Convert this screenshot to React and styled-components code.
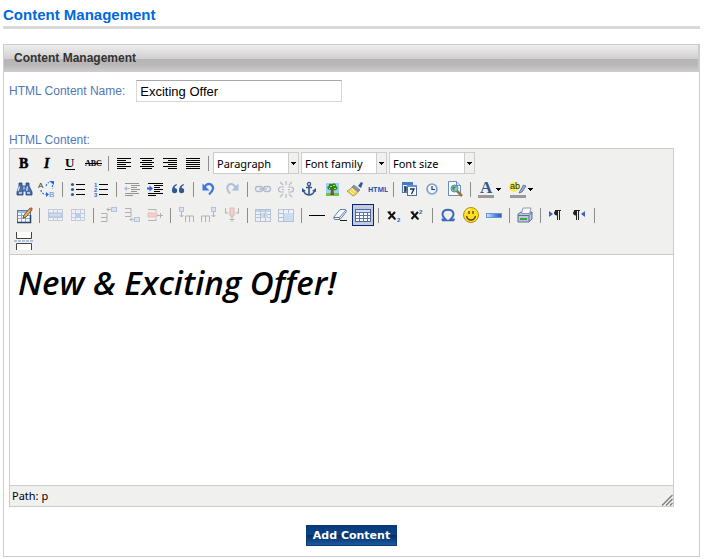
import React from "react";
import styled, { createGlobalStyle, css } from "styled-components";

const UI_FONT = `"Liberation Sans", Arial, sans-serif`;
const SMALL_FONT = `"Noto Sans", Tahoma, sans-serif`;
const SERIF = `"Liberation Serif", serif`;

const GlobalStyle = createGlobalStyle`
  *, *::before, *::after { box-sizing: border-box; }
  body { margin: 0; background: #fff; font-family: ${UI_FONT}; color: #000; }
  button, input, select { margin: 0; font: inherit; }
`;

const Page = styled.main`
  padding: 6px 4px 2px 3px;
`;

const PageTitle = styled.h1`
  margin: 0 0 15px;
  padding-bottom: 2px;
  border-bottom: 3px solid #d9d9d9;
  color: #0068e0;
  font-size: 15px;
  line-height: 18px;
`;

const Panel = styled.section`
  border: 1px solid #ccc;
`;

const PanelTitle = styled.h2`
  margin: 0;
  padding: 0 10px;
  border-right: 1px solid #ccc;
  background: linear-gradient(#efeeee, #d0cecf 52%, #b7b4b5 53%, #bab8b8 75%, #cfcece);
  color: #333;
  font-size: 12px;
  line-height: 27px;
`;

const Form = styled.form`
  padding: 8px 25px 10px 5px;
`;

const NameRow = styled.div`
  display: flex;
  align-items: center;
  gap: 11px;
  margin-bottom: 30px;
`;

const Label = styled.label`
  display: block;
  color: #5078b8;
  font-size: 12px;
  line-height: 16px;
`;

const NameInput = styled.input`
  width: 206px;
  height: 22px;
  padding: 0 3px;
  border: 1px solid #d4d6da;
  border-top-color: #a5a8b0;
  background: #fff;
  font-size: 13px;
`;

const Editor = styled.div`
  border: 1px solid #ccc;
`;

const Toolbar = styled.div`
  padding: 1px 0 0 3px;
  border-bottom: 1px solid #ccc;
  background: #f0f0ee;
`;

const ToolRow = styled.div`
  display: flex;
  align-items: center;
  gap: 1px;
  height: 26px;
`;

const ToolButton = styled.button`
  display: flex;
  flex: none;
  align-items: center;
  width: ${(p) => (p.$split ? 31 : 22)}px;
  height: 22px;
  padding: 0;
  border: 1px solid transparent;
  background: transparent;
  ${(p) => p.$active && css`
    border-color: #0a246a;
    background: #c2cbe0;
  `}
  svg { flex: none; }
`;

const Separator = styled.span`
  flex: none;
  width: 1px;
  height: 15px;
  margin: 0 3px;
  background: #8c8c8c;
`;

const Picker = styled.span`
  position: relative;
  flex: none;
  width: 86px;
  height: 22px;
  & + & { margin-left: 1px; }
`;

const PickerSelect = styled.select`
  width: 100%;
  height: 100%;
  padding: 0 12px 0 3px;
  border: 1px solid #ccc;
  border-radius: 0;
  background: #fff;
  color: #000;
  appearance: none;
  font-family: ${SMALL_FONT};
  font-size: 11px;
`;

const PickerArrow = styled.span`
  position: absolute;
  top: 1px;
  right: 1px;
  bottom: 1px;
  display: flex;
  align-items: center;
  justify-content: center;
  width: 10px;
  border-left: 1px solid #ccc;
  background: #f0f0ee;
  pointer-events: none;
`;

const Content = styled.div`
  min-height: 230px;
  padding: 8px;
  background: #fff;
  font-family: "Open Sans", "Trebuchet MS", sans-serif;
  font-size: 33px;
  font-style: italic;
  font-weight: 600;
  font-variant-ligatures: none;
  line-height: 40px;
  p { margin: 0; }
`;

const StatusBar = styled.div`
  display: flex;
  align-items: flex-end;
  justify-content: space-between;
  border-top: 1px solid #ccc;
  padding-left: 2px;
  background: #f0f0ee;
  font-family: ${SMALL_FONT};
  font-size: 11px;
  line-height: 20px;
`;

const Actions = styled.div`
  display: flex;
  justify-content: center;
  margin: 18px 0 0 20px;
`;

const SubmitButton = styled.button`
  height: 21px;
  padding: 0 6px;
  border: 1px solid #0b3a70;
  background: linear-gradient(#063a7b, #0a4588 45%, #003067 50%, #1d5ba0);
  color: #fff;
  font-family: "DejaVu Sans", Verdana, sans-serif;
  font-size: 11px;
  font-weight: 700;
  white-space: nowrap;
`;

const lines = (rows, color = "#000") =>
  rows.map(([x, y, w]) => <rect key={`${x}-${y}`} x={x} y={y} width={w} height="1" fill={color} />);

const Arrow = () => (
  <svg width="5" height="3" viewBox="0 0 5 3" shapeRendering="crispEdges" aria-hidden="true">
    <path d="M0 0H5V1H4V2H3V3H2V2H1V1H0Z" />
  </svg>
);

const align = (xs) => lines(xs.map(([x, w], i) => [x, 5 + i * 2, w]));
const L = 14;
const S = 9;

const icons = {
  bold: <text x="5" y="15" fontFamily={SERIF} fontSize="14" fontWeight="700" stroke="#000" strokeWidth=".5">B</text>,
  italic: <text x="7" y="15" fontFamily={SERIF} fontSize="14" fontWeight="700" fontStyle="italic" stroke="#000" strokeWidth=".4">I</text>,
  underline: (
    <>
      <text x="5" y="14" fontFamily={SERIF} fontSize="13" fontWeight="700">U</text>
      <rect x="5" y="16" width="10" height="1" />
    </>
  ),
  strike: (
    <>
      <text x="2" y="13" fontFamily={SERIF} fontSize="8" fontWeight="700">ABC</text>
      <rect x="2" y="10" width="17" height="1" />
    </>
  ),
  left: align([[3, L], [3, S], [3, L], [3, S], [3, L], [3, S]]),
  center: align([[3, L], [5, S + 1], [3, L], [5, S + 1], [3, L], [5, S + 1]]),
  right: align([[3, L], [8, S], [3, L], [8, S], [3, L], [8, S]]),
  justify: align([[3, L], [3, L], [3, L], [3, L], [3, L], [3, L]]),
  find: (
    <>
      <path d="M5 4h3v3h4V4h3v3l3 6v3h-6v-4H9v4H3v-3l2-6z" fill="#4c70ad" stroke="#233f75" strokeWidth=".8" />
      <path d="M5.5 7.5 4 12M13.5 7.5 12.7 12M5 14h3M13 14h3" stroke="#d2e1fa" strokeWidth="1.3" />
      <path d="M9.5 7.5v3h1v-3z" fill="#dbe5f5" />
    </>
  ),
  replace: (
    <>
      <text x="1" y="9" fontFamily={UI_FONT} fontSize="8" fill="#333">A</text>
      <text x="12" y="18" fontFamily={UI_FONT} fontSize="8" fill="#5686e5">B</text>
      <path d="M9 7Q10 4 12 3.5M15.5 6v4M4 11Q4 15 10 15.5" fill="none" stroke="#3a70e3" strokeWidth="1.2" strokeDasharray="2 1.4" />
      <path d="M12 2h5v4zM9 13l3 2.5L9 18z" fill="#2f67df" />
    </>
  ),
  bullets: (
    <>
      {[5, 10, 15].map((y) => (
        <g key={y}>
          <circle cx="4.5" cy={y + 0.5} r="1.6" fill="#385a98" />
          <rect x="8" y={y} width="9" height="1" />
        </g>
      ))}
    </>
  ),
  numbers: (
    <>
      {[5, 10, 15].map((y, i) => (
        <g key={y}>
          <text x="3" y={y + 3} fontFamily={UI_FONT} fontSize="6" fontWeight="700" fill="#3868c8">{i + 1}</text>
          <rect x="8" y={y} width="9" height="1" />
        </g>
      ))}
    </>
  ),
  outdent: (
    <g opacity=".38">
      {lines([[3, 4, 14], [9, 6, 9], [9, 8, 6], [9, 10, 9], [9, 12, 6], [3, 14, 14], [3, 16, 8]])}
      <path d="M2 9.5 5 7v2h3v1H5v2z" fill="#3463c5" />
    </g>
  ),
  indent: (
    <>
      {lines([[3, 4, 15], [9, 6, 9], [9, 8, 6], [9, 10, 9], [9, 12, 6], [3, 14, 15], [3, 16, 8]])}
      <path d="M8 9.5 4.5 6.5v2H2v2h2.5v2z" fill="#2867dd" />
    </>
  ),
  quote: (
    <g fill="#315892">
      <path d="M8.5 5Q4 6.5 4 11.5A2.6 2.6 0 1 0 6.5 9Q6.6 7 9 6z" />
      <path d="M15.5 5Q11 6.5 11 11.5A2.6 2.6 0 1 0 13.5 9Q13.6 7 16 6z" />
    </g>
  ),
  undo: (
    <>
      <path d="M5 9Q8 3.5 12 5.5Q17 9 10 15.5" fill="none" stroke="#3f78da" strokeWidth="2.2" />
      <path d="M3.5 4.5v7h7z" fill="#3f78da" />
    </>
  ),
  redo: (
    <g opacity=".4">
      <path d="M14 9Q11 3.5 7 5.5Q3 9 8 14.5" fill="none" stroke="#4277bd" strokeWidth="2" />
      <path d="M16.5 4.5v7h-7z" fill="#4277bd" />
    </g>
  ),
  link: (
    <g fill="none" stroke="#7e8fac" opacity=".55" strokeWidth="1.3">
      <rect x="2.5" y="7.5" width="7" height="5" rx="2.5" />
      <rect x="10.5" y="7.5" width="7" height="5" rx="2.5" />
      <path d="M6 10h8" />
    </g>
  ),
  unlink: (
    <g fill="none" stroke="#7e8fac" opacity=".55" strokeWidth="1.2">
      <path d="M8 8H5a2 2 0 0 0 0 5h3M12 8h3a2 2 0 0 1 0 5h-3M6 10.5h2M12 10.5h2" />
      <path d="m4 3 3 3M10 2v4M16 3l-3 3M4 18l3-3M10 19v-4M16 18l-3-3" />
    </g>
  ),
  anchor: (
    <>
      <circle cx="10" cy="5" r="1.6" fill="none" stroke="#34568e" strokeWidth="1.3" />
      <path d="M10 6.5V16M7 8.5h6M4.5 11q.5 4.5 5.5 5 5-.5 5.5-5" fill="none" stroke="#34568e" strokeWidth="1.6" />
      <path d="M3 13V9l4 3zM17 13V9l-4 3z" fill="#34568e" />
    </>
  ),
  image: (
    <>
      <rect x="4" y="4" width="13" height="13" fill="#9ad0fb" />
      <rect x="4" y="14" width="13" height="3" fill="#6fc04f" />
      <path d="M9 10h2.5l.5 6H8.5z" fill="#81531d" />
      <path d="M6 10Q4 8 7 7q-1-3 3-2 4-2 4 2 3 2 0 4-3 1-4-1-2 2-4 0z" fill="#268616" />
      <path d="M8 7.5h2M11 6.5h2M12 9.5h2M7 9.5h1" stroke="#c6e03d" />
    </>
  ),
  cleanup: (
    <>
      <path d="m13 7 3-4 2 1-2 5z" fill="#315797" />
      <path d="m9 6 6 5-2 2-6-5z" fill="#8797ba" stroke="#54648a" strokeWidth=".6" />
      <path d="M7 8Q5 11 2 12l6 5q3-1 5-4z" fill="#f3d65f" stroke="#987d31" strokeWidth=".7" />
      <path d="M5 12l3 3M7 10l3 3" stroke="#fff3a8" />
    </>
  ),
  html: <text x="0" y="13" fontFamily={SMALL_FONT} fontSize="7" fontWeight="700" fill="#2755ad">HTML</text>,
  date: (
    <>
      <rect x="3.5" y="3.5" width="10" height="10" fill="#e6effd" stroke="#4979c2" />
      <rect x="3" y="3" width="11" height="3" fill="#4979c2" />
      <rect x="8.5" y="6.5" width="9" height="10" fill="#f7faff" stroke="#526c9a" />
      <rect x="8" y="6" width="10" height="2" fill="#6691d5" />
      <path d="M5 8h2v4H5M5 10h2M11 10h4l-2.5 5" fill="none" stroke="#142c57" strokeWidth="1.3" />
    </>
  ),
  time: (
    <>
      <circle cx="10" cy="10" r="5" fill="#edf4fd" stroke="#7c9bcd" strokeWidth="1.6" />
      <path d="M10 7v3.5h3" fill="none" stroke="#233c74" strokeWidth="1.2" />
    </>
  ),
  preview: (
    <>
      <path d="M3.5 2.5h8l4 4v10h-12z" fill="#fafcff" stroke="#6c8cc0" />
      <path d="M11.5 2.5v4h4" fill="#cfe0f7" stroke="#6c8cc0" />
      <path d="m12 12 5 5" stroke="#9b7334" strokeWidth="2.5" />
      <circle cx="9.5" cy="9.5" r="3.5" fill="#89c8b1" stroke="#5784bd" />
      <path d="M7 9q2-3 4-1l-2 2 1 2q-2 0-3-3z" fill="#47924b" />
    </>
  ),
  color: (
    <>
      <text x="4" y="14" fontFamily={SERIF} fontSize="17" fontWeight="700" fill="#34568e">A</text>
      <rect x="2" y="16" width="16" height="3" fill="#999" />
    </>
  ),
  highlight: (
    <>
      <circle cx="6" cy="8" r="5" fill="#f7ec54" />
      <text x="2" y="10" fontFamily={UI_FONT} fontSize="9" fill="#222">ab</text>
      <path d="m12 12 3.5-6 2.5 1-4 6-3 1z" fill="#8fb0dd" stroke="#4c6690" strokeWidth=".8" />
      <rect x="2" y="16" width="16" height="3" fill="#999" />
    </>
  ),
  table: (
    <>
      <rect x="3.5" y="5.5" width="13" height="12" fill="#f5f9ff" stroke="#577bb4" />
      <rect x="4" y="6" width="12" height="2" fill="#9bb9e7" />
      <path d="M4 10.5h12M4 13.5h12M7.5 8v9M11.5 8v9" stroke="#8aa6d2" />
      <path d="M16.5 10v7.5H3" fill="none" stroke="#293f65" strokeWidth="1.5" />
      <path d="m10 10 6-7 2 2-6 7-3 1z" fill="#efb252" stroke="#5c3b17" strokeWidth=".8" />
      <path d="m15 4 2-2 2 2-2 2z" fill="#b66945" />
    </>
  ),
  rowProps: (
    <g opacity=".4">
      <rect x="3.5" y="4.5" width="14" height="11" fill="#e9f1ff" stroke="#8098c1" />
      <path d="M3 12.5h14M8.5 5v3M12.5 5v3M8.5 12v3M12.5 12v3" stroke="#8098c1" />
      <rect x="4" y="8" width="13" height="4" fill="#9cbbf0" stroke="#5e79b0" />
    </g>
  ),
  cellProps: (
    <g opacity=".4">
      <rect x="3.5" y="4.5" width="13" height="11" fill="#e9f1ff" stroke="#8098c1" />
      <path d="M3 8.5h14M3 12.5h14M7.5 5v10M12.5 5v10" stroke="#8098c1" />
      <rect x="7" y="8" width="6" height="4" fill="#6f9dec" />
    </g>
  ),
  rowBefore: (
    <g opacity=".4" fill="none" stroke="#555">
      <path d="M2 8.5h6v8H2M2 12.5h6M8 4.5h5M10 2.5l-2 2 2 2" />
      <rect x="12.5" y="2.5" width="5" height="4" fill="#bcd2fb" stroke="#587ec5" />
    </g>
  ),
  rowAfter: (
    <g opacity=".4" fill="none" stroke="#555">
      <path d="M3 3.5h6v8H3M3 7.5h6M8 14.5h5M10 12.5l-2 2 2 2" />
      <rect x="12.5" y="12.5" width="5" height="4" fill="#bcd2fb" stroke="#587ec5" />
    </g>
  ),
  rowDelete: (
    <g opacity=".4" fill="none" stroke="#555">
      <path d="M3 4.5h8v2M3 15.5h8v-2" />
      <path d="M3 8h9v4H3z" fill="#f4a1a1" stroke="#d77" />
      <path d="M12 10.5h6M15.5 8v5" />
    </g>
  ),
  colBefore: (
    <g opacity=".4" fill="none" stroke="#555">
      <rect x="3.5" y="2.5" width="4" height="4" fill="#bcd2fb" stroke="#587ec5" />
      <path d="M5.5 7v5M3.5 10l2 2 2-2M9.5 17v-6h8v6M13.5 11v6" />
    </g>
  ),
  colAfter: (
    <g opacity=".4" fill="none" stroke="#555">
      <rect x="12.5" y="2.5" width="4" height="4" fill="#bcd2fb" stroke="#587ec5" />
      <path d="M14.5 7v5M12.5 10l2 2 2-2M2.5 17v-6h8v6M6.5 11v6" />
    </g>
  ),
  colDelete: (
    <g opacity=".4" fill="none" stroke="#555">
      <path d="M3.5 3v5h3M16.5 3v5h-3" />
      <path d="M8 3h4v8H8z" fill="#f4a1a1" stroke="#c66" />
      <path d="M10 11v6M7.5 14.5h5" />
    </g>
  ),
  split: (
    <g opacity=".45">
      <rect x="2.5" y="4.5" width="15" height="12" fill="#edf3ff" stroke="#6d8bbd" />
      <rect x="3" y="5" width="14" height="2" fill="#8eaee4" />
      <path d="M3 9.5h14M3 12.5h14M7.5 5v11M12.5 5v11" stroke="#6d8bbd" />
      <rect x="8" y="8" width="7" height="5" fill="#9dbdf4" />
      <path d="M11.5 8v5" stroke="#6d8bbd" />
    </g>
  ),
  merge: (
    <g opacity=".45">
      <rect x="2.5" y="4.5" width="15" height="12" fill="#edf3ff" stroke="#6d8bbd" />
      <path d="M3 8.5h14M3 12.5h14M7.5 5v11M12.5 5v11" stroke="#6d8bbd" />
      <rect x="8" y="8" width="9" height="8" fill="#a6c4f8" />
    </g>
  ),
  rule: <rect x="2" y="10" width="16" height="1" />,
  eraser: (
    <>
      <path d="M3.5 12.5 10 4.5h5.5l1 2-6.5 8H4.5z" fill="#f5f8fe" stroke="#667da8" />
      <path d="M4 12.5h5.5l6.5-7.5M9.5 12.5v2" fill="none" stroke="#667da8" />
      <path d="M10 15.5h7" stroke="#222" />
    </>
  ),
  grid: (
    <>
      <rect x="2.5" y="4.5" width="15" height="12" fill="#fff" stroke="#4e6a99" />
      <rect x="3" y="5" width="14" height="2" fill="#d3e3fc" />
      <path d="M3 7.5h14M3 10.5h14M3 13.5h14M6.5 7v9M10.5 7v9M14.5 7v9" stroke="#5c76a4" />
    </>
  ),
  sub: (
    <>
      <path d="M4.5 7 11 14M11 7l-6.5 7" stroke="#111" strokeWidth="2" />
      <path d="M3.5 7H7M10 14h2" stroke="#111" />
      <text x="13" y="17" fontFamily={UI_FONT} fontSize="6" fontWeight="700" fill="#2864d5">2</text>
    </>
  ),
  sup: (
    <>
      <path d="M4.5 7 11 14M11 7l-6.5 7" stroke="#111" strokeWidth="2" />
      <path d="M3.5 7H7M10 14h2" stroke="#111" />
      <text x="12" y="9" fontFamily={UI_FONT} fontSize="6" fontWeight="700" fill="#2864d5">2</text>
    </>
  ),
  omega: <path d="M4 15.2h4.5Q4.5 12 4.5 9 5 4.8 10 4.8T15.5 9q0 3-4 6.2H16M4.5 15.5v-2M15.8 15.5v-2" fill="none" stroke="#3c69bf" strokeWidth="2" />,
  smiley: (
    <>
      <circle cx="10" cy="10" r="7.5" fill="#ffdf22" stroke="#b88c13" />
      <path d="M8 6v3M12 6v3M5.5 11q1 4 4.5 4t4.5-4" fill="none" stroke="#573f08" strokeWidth="1.3" />
      <path d="M5 7q1-3 4-3" fill="none" stroke="#fff9a8" />
    </>
  ),
  advRule: (
    <>
      <defs>
        <linearGradient id="rule-fade">
          <stop stopColor="#d5e5ff" />
          <stop offset=".6" stopColor="#4e86df" />
          <stop offset="1" stopColor="#275cb5" />
        </linearGradient>
      </defs>
      <rect x="2.5" y="8.5" width="15" height="4" fill="url(#rule-fade)" stroke="#6b94d3" />
    </>
  ),
  print: (
    <>
      <path d="m3 9 3-2h11v7l-3 3H3z" fill="#bcc8dc" stroke="#5e7191" />
      <path d="M3 10.5h11l3-3M14 10.5V17" fill="none" stroke="#5e7191" />
      <path d="M8 3h8l-1.5 5.5H6.5z" fill="#f8faff" stroke="#7189b1" strokeWidth=".8" />
      <rect x="5" y="13" width="7" height="2" fill="#39aa35" />
    </>
  ),
  ltr: (
    <>
      <path d="M3 6v6l4-3z" fill="#3564c5" />
      <path d="M11.5 6v4h-1a2 2 0 0 1 0-4zM9 5.5h6M11.5 6v9M13.5 6v9" stroke="#222" fill="#222" />
    </>
  ),
  rtl: (
    <>
      <path d="M16 6v6l-4-3z" fill="#3564c5" />
      <path d="M7.5 6v4h-1a2 2 0 0 1 0-4zM5 5.5h6M7.5 6v9M9.5 6v9" stroke="#222" fill="#222" />
    </>
  ),
  pageBreak: (
    <>
      <path d="M2.5 1v6.5h15V1M2.5 19v-6.5h15V19" fill="#fff" stroke="#444" />
      <path d="M0 10h19" stroke="#6a93c7" strokeDasharray="3 1" />
    </>
  ),
};

const Icon = ({ name }) => (
  <svg width="20" height="20" viewBox="0 0 20 20" fill="#000" aria-hidden="true">{icons[name]}</svg>
);

const SPLIT = ["color", "highlight"];

const rows = [
  "bold italic underline strike | left center right justify |",
  "find replace | bullets numbers | outdent indent quote | undo redo | link unlink anchor image cleanup html | date time preview | color highlight",
  "table | rowProps cellProps | rowBefore rowAfter rowDelete | colBefore colAfter colDelete | split merge | rule eraser grid | sub sup | omega smiley advRule | print | ltr rtl |",
  "pageBreak",
].map((row) => row.split(" "));

const Tools = ({ items }) =>
  items.map((name, i) =>
    name === "|" ? (
      <Separator key={i} />
    ) : (
      <ToolButton key={i} type="button" aria-label={name} $active={name === "grid"} $split={SPLIT.includes(name)}>
        <Icon name={name} />
        {SPLIT.includes(name) && <Arrow />}
      </ToolButton>
    )
  );

export default function App() {
  return (
    <>
      <GlobalStyle />
      <Page>
        <PageTitle>Content Management</PageTitle>
        <Panel>
          <PanelTitle>Content Management</PanelTitle>
          <Form onSubmit={(e) => e.preventDefault()}>
            <NameRow>
              <Label htmlFor="content-name">HTML Content Name:</Label>
              <NameInput id="content-name" defaultValue="Exciting Offer" />
            </NameRow>
            <Label as="div" id="content-label">HTML Content:</Label>
            <Editor>
              <Toolbar role="toolbar">
                {rows.map((items, i) => (
                  <ToolRow key={i}>
                    <Tools items={items} />
                    {i === 0 && ["Paragraph", "Font family", "Font size"].map((label) => (
                      <Picker key={label}>
                        <PickerSelect aria-label={label}>
                          <option>{label}</option>
                        </PickerSelect>
                        <PickerArrow><Arrow /></PickerArrow>
                      </Picker>
                    ))}
                  </ToolRow>
                ))}
              </Toolbar>
              <Content contentEditable suppressContentEditableWarning role="textbox" aria-labelledby="content-label" spellCheck={false}>
                <p>New &amp; Exciting Offer!</p>
              </Content>
              <StatusBar>
                <span>Path: p</span>
                <svg width="12" height="12" viewBox="0 0 12 12" aria-hidden="true">
                  <path d="M1 11.5 11.5 1M5 11.5 11.5 5M9 11.5 11.5 9" stroke="#777" strokeWidth="1.2" />
                </svg>
              </StatusBar>
            </Editor>
            <Actions>
              <SubmitButton type="submit">Add Content</SubmitButton>
            </Actions>
          </Form>
        </Panel>
      </Page>
    </>
  );
}
